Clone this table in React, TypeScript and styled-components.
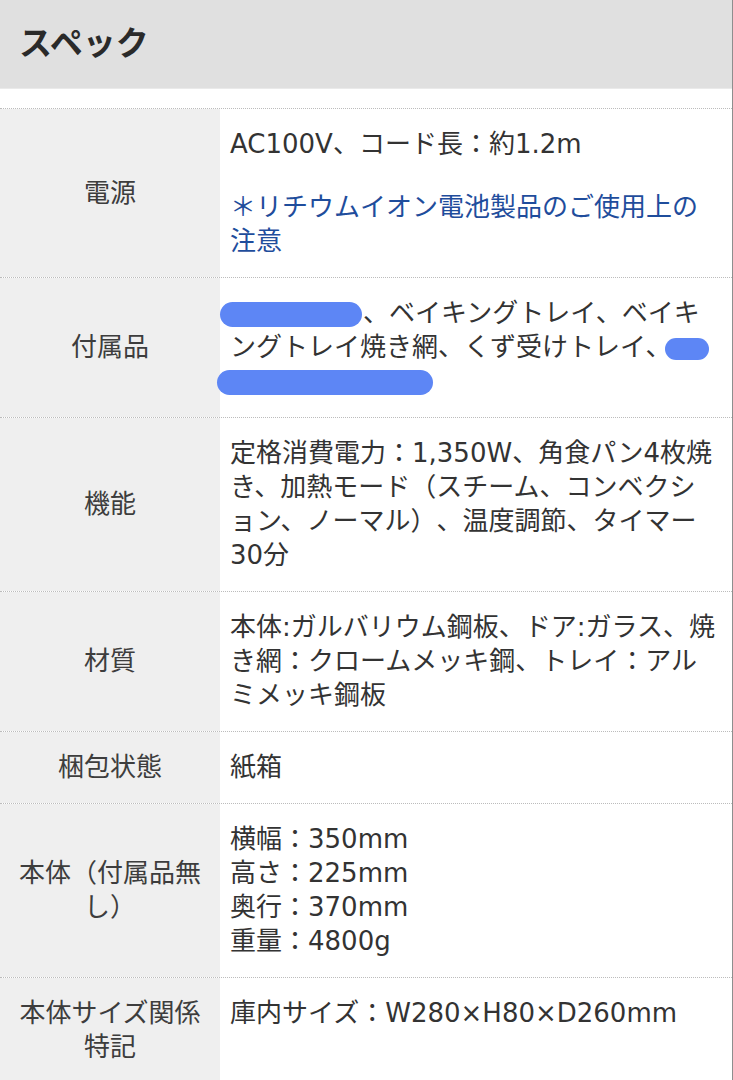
import React from "react";
import styled, { createGlobalStyle } from "styled-components";

const GlobalStyle = createGlobalStyle`
  html, body {
    margin: 0;
    padding: 0;
    background: #ffffff;
  }
  body {
    font-family: "DejaVu Sans", "Noto Sans CJK JP", sans-serif;
    color: #333333;
    text-spacing-trim: space-all;
    -webkit-font-smoothing: antialiased;
  }
  * {
    box-sizing: border-box;
  }
`;

const Page = styled.div`
  width: 733px;
  min-height: 1080px;
  border-right: 1px solid #8e8e8e;
  background: #ffffff;
  overflow: hidden;
`;

const Header = styled.header`
  height: 89px;
  background: #e0e0e0;
  border-bottom: 1px solid #eaeaea;
  display: flex;
  align-items: center;
  padding: 0 0 5px 19px;
`;

const Title = styled.h2`
  margin: 0;
  font-family: "Noto Sans CJK JP", sans-serif;
  font-weight: 700;
  font-size: 33px;
  line-height: 1;
  color: #2a2a2a;
`;

const SpecTable = styled.div`
  margin-top: 19px;
  display: flex;
  flex-direction: column;
`;

const Row = styled.div`
  display: grid;
  grid-template-columns: 220px 1fr;
  border-top: 1px dotted #bcbcbc;
`;

const Label = styled.div`
  background: #efefef;
  display: flex;
  align-items: center;
  justify-content: center;
  text-align: center;
  padding: 18px 10px 19px;
  font-size: 26px;
  line-height: 34px;
  color: #3d3d3d;
`;

const Value = styled.div`
  background: #ffffff;
  padding: 18px 12px 19px 10px;
  font-size: 26px;
  line-height: 34px;
  color: #333333;
`;

const Para = styled.p`
  margin: 0;
`;

const Note = styled.p`
  margin: 29px 0 0;
  color: #1f4d9c;
`;

const Redact = styled.span<{ $w: number; $h: number; $ml: number; $mr: number }>`
  display: inline-block;
  width: ${(p) => p.$w}px;
  height: ${(p) => p.$h}px;
  margin-left: ${(p) => p.$ml}px;
  margin-right: ${(p) => p.$mr}px;
  background: #5d86f5;
  border-radius: ${(p) => p.$h / 2}px;
  vertical-align: middle;
`;

type Spec = { label: string; value: React.ReactNode };

const specs: Spec[] = [
  {
    label: "電源",
    value: (
      <>
        <Para>AC100V、コード長：約1.2m</Para>
        <Note>＊リチウムイオン電池製品のご使用上の注意</Note>
      </>
    ),
  },
  {
    label: "付属品",
    value: (
      <Para>
        <Redact $w={142} $h={25} $ml={-10} $mr={1} />
        、ベイキングトレイ、ベイキングトレイ焼き網、くず受けトレイ、
        <Redact $w={44} $h={22} $ml={-6} $mr={-12} />
        <Redact $w={216} $h={25} $ml={-13} $mr={0} />
      </Para>
    ),
  },
  {
    label: "機能",
    value: (
      <Para>
        定格消費電力：1,350W、角食パン4枚焼き、加熱モード（スチーム、コンベクション、ノーマル）、温度調節、タイマー30分
      </Para>
    ),
  },
  {
    label: "材質",
    value: (
      <Para>
        本体:ガルバリウム鋼板、ドア:ガラス、焼き網：クロームメッキ鋼、トレイ：アルミメッキ鋼板
      </Para>
    ),
  },
  { label: "梱包状態", value: <Para>紙箱</Para> },
  {
    label: "本体（付属品無し）",
    value: (
      <Para>
        横幅：350mm
        <br />
        高さ：225mm
        <br />
        奥行：370mm
        <br />
        重量：4800g
      </Para>
    ),
  },
  {
    label: "本体サイズ関係特記",
    value: <Para>庫内サイズ：W280×H80×D260mm</Para>,
  },
];

export default function App() {
  return (
    <>
      <GlobalStyle />
      <Page>
        <Header>
          <Title>スペック</Title>
        </Header>
        <SpecTable>
          {specs.map((s) => (
            <Row key={s.label}>
              <Label>{s.label}</Label>
              <Value>{s.value}</Value>
            </Row>
          ))}
        </SpecTable>
      </Page>
    </>
  );
}
